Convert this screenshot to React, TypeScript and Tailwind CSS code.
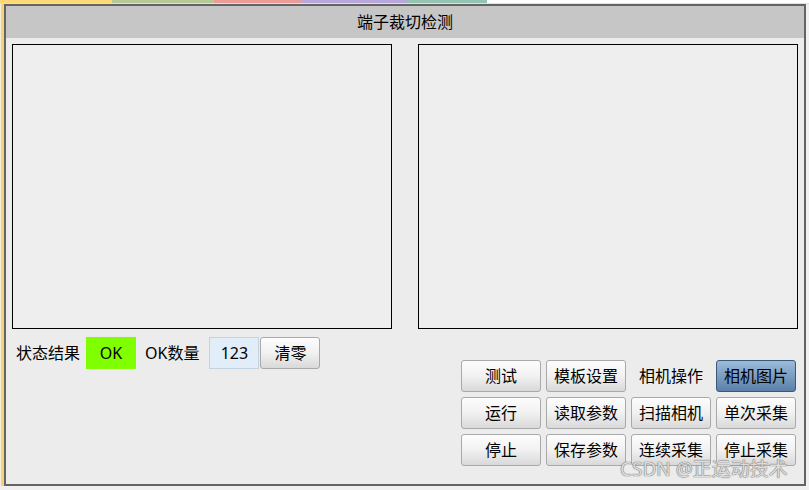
import React from 'react';

const cjk = '"Noto Sans", "Noto Sans CJK SC", sans-serif';

const tabs = [
  { w: 112, c: 'bg-[#fcd877]' },
  { w: 102, c: 'bg-[#b6c997]' },
  { w: 88, c: 'bg-[#ea9c98]' },
  { w: 105, c: 'bg-[#b7a7da]' },
  { w: 80, c: 'bg-[#95c3b2]' },
];

function Btn({ label, active = false, w = 'w-[80px]' }: { label: string; active?: boolean; w?: string }) {
  return (
    <button
      type="button"
      className={
        (active
          ? 'border-[#3b5876] bg-gradient-to-b from-[#9cbbdb] to-[#5b80a8] '
          : 'border-[#a9a9a9] bg-gradient-to-b from-[#fdfdfd] via-[#f1f1f1] to-[#d9d9d9] ') +
        w +
        ' flex h-[32px] items-center justify-center rounded-[3px] border text-[16px] text-black'
      }
    >
      {label}
    </button>
  );
}

export default function App() {
  return (
    <div className="relative h-[490px] w-[809px] overflow-hidden bg-[#f0f0f0]" style={{ fontFamily: cjk }}>
      {/* tab colour strip */}
      <div className="flex h-[3px]">
        {tabs.map((t, i) => (
          <div key={i} className={t.c} style={{ width: t.w }} />
        ))}
        <div className="flex-1 bg-white" />
      </div>
      <div className="h-[1px] bg-[#e8e2cc]" />

      <div className="flex">
        <div className="w-[4px] border-l border-[#f4eee0] bg-[#f6d377]" />
        <div className="flex h-[482px] w-[802px] flex-col border-2 border-[#646464] bg-[#ececec]">
          {/* title bar */}
          <div className="flex h-[32px] items-center justify-center bg-[#c6c6c6] text-[16px] text-black">
            端子裁切检测
          </div>

          {/* image views */}
          <div className="flex justify-between px-[6px] pt-[6px]">
            <div className="h-[285px] w-[380px] border-[1.5px] border-black bg-[#eeeeee]" />
            <div className="h-[285px] w-[380px] border-[1.5px] border-black bg-[#eeeeee]" />
          </div>

          <div className="flex justify-between pt-[8px] pl-[10px] pr-[8px]">
            {/* status row */}
            <div className="flex h-[32px] items-center text-[16px] text-black">
              <span>状态结果</span>
              <div className="ml-[6px] flex h-[32px] w-[50px] items-center justify-center bg-[#80ff00]">OK</div>
              <span className="ml-[9px]">OK数量</span>
              <div className="ml-[10px] flex h-[32px] w-[50px] items-center justify-center border border-[#c4d3e0] bg-[#e1eefa]">
                123
              </div>
              <Btn label="清零" w="w-[60px] ml-[1px]" />
            </div>

            {/* control buttons */}
            <div className="mt-[23px] grid grid-cols-[80px_80px_80px_80px] gap-[5px]">
              <Btn label="测试" />
              <Btn label="模板设置" />
              <div className="flex h-[32px] items-center justify-center text-[16px] text-black">相机操作</div>
              <Btn label="相机图片" active />
              <Btn label="运行" />
              <Btn label="读取参数" />
              <Btn label="扫描相机" />
              <Btn label="单次采集" />
              <Btn label="停止" />
              <Btn label="保存参数" />
              <Btn label="连续采集" />
              <Btn label="停止采集" />
            </div>
          </div>
        </div>
      </div>

      {/* watermark */}
      <div className="pointer-events-none absolute left-[620px] top-[456px] text-[19px] leading-[26px] text-[#dcdcdc] [text-shadow:0_0_1px_#6a6a6a,0_0_1px_#6a6a6a]">
        CSDN @正运动技术
      </div>
    </div>
  );
}
